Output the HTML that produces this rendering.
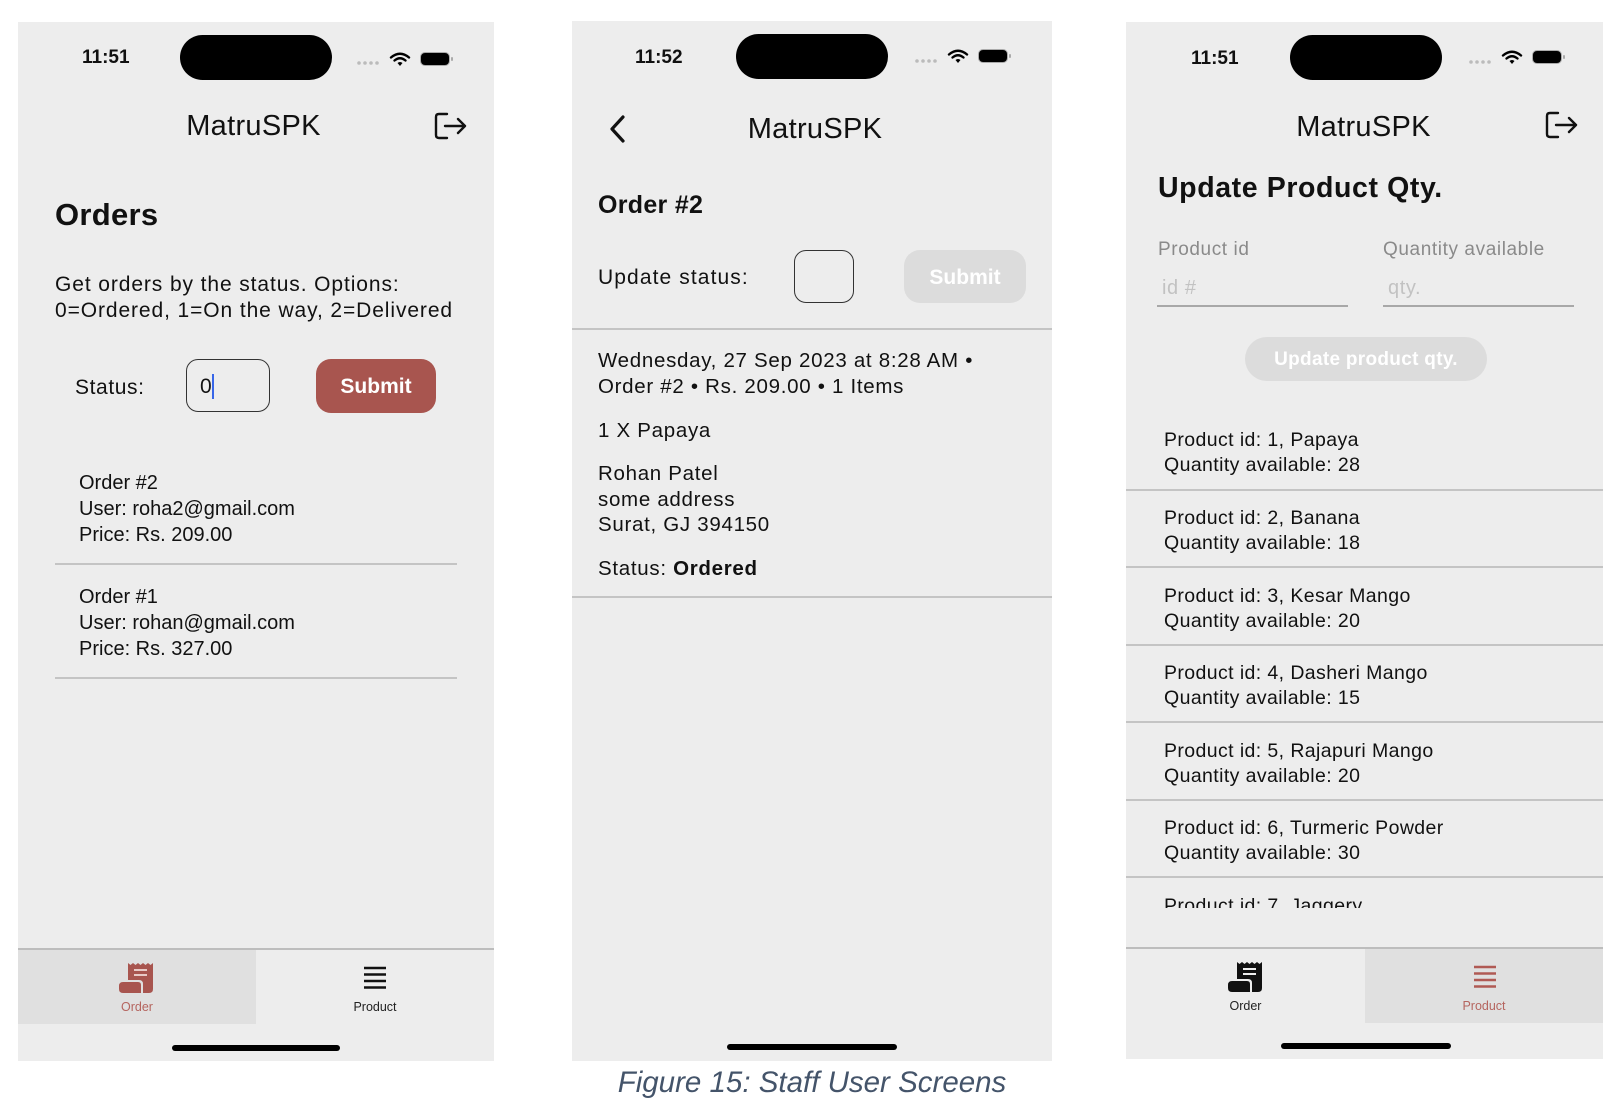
<!DOCTYPE html>
<html><head><meta charset="utf-8"><style>
*{margin:0;padding:0;box-sizing:border-box}
body{width:1624px;height:1106px;background:#fff;position:relative;overflow:hidden;font-family:"Liberation Sans",sans-serif;color:#111}
.ph{position:absolute;background:#ededed;overflow:hidden}
.a{position:absolute;white-space:nowrap}
.notch{position:absolute;background:#000;border-radius:24px;height:45px;width:152px}
.time{position:absolute;font-weight:bold;font-size:19px;line-height:20px}
.hr{position:absolute;height:2px;background:#c4c4c4}
</style></head><body>

<!-- PHONE 1 -->
<div class="ph" style="left:18px;top:22px;width:476px;height:1039px">
  <div class="time" style="left:64px;top:26px">11:51</div>
  <div class="notch" style="left:162px;top:13px"></div>
  <svg class="a" style="left:338px;top:28px" width="100" height="20" viewBox="0 0 100 20">
    <g fill="#bbb"><circle cx="3" cy="13" r="1.8"/><circle cx="9" cy="13" r="1.8"/><circle cx="15" cy="13" r="1.8"/><circle cx="21" cy="13" r="1.8"/></g>
    <g fill="none" stroke="#000" stroke-width="2.4" stroke-linecap="round"><path d="M35 7.5 Q44 0 53 7.5"/><path d="M38.5 10.5 Q44 6 49.5 10.5"/></g><path d="M41.5 13 L44 16 L46.5 13 Q44 11 41.5 13Z" fill="#000"/>
    <rect x="64.5" y="2.5" width="29" height="13" rx="4.5" fill="#000" stroke="#aaa" stroke-width="1"/><rect x="95" y="7" width="2" height="4" rx="1" fill="#aaa"/>
  </svg>
  <div class="a" style="left:0;width:476px;text-align:center;top:86px;font-size:29px;line-height:36px;padding-right:5px;letter-spacing:0.3px">MatruSPK</div>
  <svg class="a" style="left:416px;top:90px" width="34" height="28" viewBox="0 0 34 28" fill="none" stroke="#111" stroke-width="2.4" stroke-linecap="round" stroke-linejoin="round"><path d="M13 2H5Q2 2 2 5V23Q2 26 5 26H13"/><path d="M11 14H31M24 7L31 14L24 21"/></svg>
  <div class="a" style="left:37px;top:174px;font-size:31px;font-weight:bold;line-height:38px;letter-spacing:0.3px">Orders</div>
  <div class="a" style="left:37px;top:250px;font-size:21px;line-height:26px;letter-spacing:0.9px">Get orders by the status. Options:<br>0=Ordered, 1=On the way, 2=Delivered</div>
  <div class="a" style="left:57px;top:353px;font-size:21px;line-height:26px;letter-spacing:0.6px">Status:</div>
  <div class="a" style="left:168px;top:337px;width:84px;height:53px;border:1.5px solid #333;border-radius:12px"></div>
  <div class="a" style="left:182px;top:352px;font-size:21px;line-height:26px">0</div>
  <div class="a" style="left:194px;top:352px;width:2px;height:25px;background:#3866e8"></div>
  <div class="a" style="left:298px;top:337px;width:120px;height:54px;background:#a8554f;border-radius:15px;color:#fff;font-weight:bold;font-size:21px;line-height:56px;text-align:center">Submit</div>
  <div class="a" style="left:61px;top:448px;font-size:20px;line-height:26px">Order #2<br>User: roha2@gmail.com<br>Price: Rs. 209.00</div>
  <div class="hr" style="left:37px;width:402px;top:541px"></div>
  <div class="a" style="left:61px;top:562px;font-size:20px;line-height:26px">Order #1<br>User: rohan@gmail.com<br>Price: Rs. 327.00</div>
  <div class="hr" style="left:37px;width:402px;top:655px"></div>
  <div class="a" style="left:0;top:926px;width:476px;height:2px;background:#bdbdbd"></div>
  <div class="a" style="left:0;top:928px;width:238px;height:74px;background:#e0e0e0"></div>
  <svg class="a" style="left:100px;top:940px" width="36" height="32" viewBox="0 0 36 32"><path d="M10 1L12.5 3L15 1L17.5 3L20 1L22.5 3L25 1L27.5 3L30 1L32.5 3L35 1V27Q35 31 31 31H25V22Q25 18 21 18H10Z" fill="#a8554f"/><path d="M1 24Q1 20 5 20H20Q23 20 23 23V31H5Q1 31 1 27Z" fill="#a8554f"/><path d="M16 8H29M16 13H29" stroke="#e8cac7" stroke-width="2"/></svg>
  <div class="a" style="left:0;width:238px;text-align:center;top:978px;font-size:12.5px;color:#b5655f">Order</div>
  <svg class="a" style="left:345px;top:943px" width="24" height="26" viewBox="0 0 24 26"><g stroke="#111" stroke-width="2.6"><path d="M1 3H23M1 9.5H23M1 16H23M1 22.5H23"/></g></svg>
  <div class="a" style="left:238px;width:238px;text-align:center;top:978px;font-size:12.5px;color:#222">Product</div>
  <div class="a" style="left:154px;top:1023px;width:168px;height:6px;border-radius:3px;background:#000"></div>
</div>

<!-- PHONE 2 -->
<div class="ph" style="left:572px;top:21px;width:480px;height:1040px">
  <div class="time" style="left:63px;top:27px">11:52</div>
  <div class="notch" style="left:164px;top:13px"></div>
  <svg class="a" style="left:342px;top:26px" width="100" height="20" viewBox="0 0 100 20">
    <g fill="#bbb"><circle cx="3" cy="14" r="1.8"/><circle cx="9" cy="14" r="1.8"/><circle cx="15" cy="14" r="1.8"/><circle cx="21" cy="14" r="1.8"/></g>
    <g fill="none" stroke="#000" stroke-width="2.4" stroke-linecap="round"><path d="M35 7.5 Q44 0 53 7.5"/><path d="M38.5 10.5 Q44 6 49.5 10.5"/></g><path d="M41.5 13 L44 16 L46.5 13 Q44 11 41.5 13Z" fill="#000"/>
    <rect x="64.5" y="2.5" width="29" height="13" rx="4.5" fill="#000" stroke="#aaa" stroke-width="1"/><rect x="95" y="7" width="2" height="4" rx="1" fill="#aaa"/>
  </svg>
  <svg class="a" style="left:36px;top:94px" width="20" height="28" viewBox="0 0 20 28" fill="none" stroke="#111" stroke-width="3.2" stroke-linecap="round" stroke-linejoin="round"><path d="M15 2L4 14L15 26"/></svg>
  <div class="a" style="left:0;width:480px;text-align:center;top:90px;font-size:29px;line-height:36px;padding-left:6px;letter-spacing:0.3px">MatruSPK</div>
  <div class="a" style="left:26px;top:168px;font-size:25px;font-weight:bold;line-height:32px;letter-spacing:0.3px">Order #2</div>
  <div class="a" style="left:26px;top:244px;font-size:21px;line-height:26px;letter-spacing:1.1px">Update status:</div>
  <div class="a" style="left:222px;top:229px;width:60px;height:53px;border:1.5px solid #333;border-radius:12px"></div>
  <div class="a" style="left:332px;top:229px;width:122px;height:53px;background:#dcdcdc;border-radius:16px;color:#fff;font-weight:bold;font-size:21px;line-height:55px;text-align:center">Submit</div>
  <div class="hr" style="left:0;width:480px;top:307px"></div>
  <div class="a" style="left:26px;top:327px;font-size:20.5px;line-height:26px;letter-spacing:0.7px">Wednesday, 27 Sep 2023 at 8:28 AM •<br>Order #2 • Rs. 209.00 • 1 Items</div>
  <div class="a" style="left:26px;top:397px;font-size:20.5px;line-height:26px;letter-spacing:0.7px">1 X Papaya</div>
  <div class="a" style="left:26px;top:440px;font-size:20.5px;line-height:25.5px;letter-spacing:0.7px">Rohan Patel<br>some address<br>Surat, GJ 394150</div>
  <div class="a" style="left:26px;top:535px;font-size:20.5px;line-height:26px;letter-spacing:0.7px">Status: <b>Ordered</b></div>
  <div class="hr" style="left:0;width:480px;top:575px"></div>
  <div class="a" style="left:155px;top:1023px;width:170px;height:6px;border-radius:3px;background:#000"></div>
</div>

<!-- PHONE 3 -->
<div class="ph" style="left:1126px;top:22px;width:477px;height:1037px">
  <div class="time" style="left:65px;top:27px">11:51</div>
  <div class="notch" style="left:164px;top:13px"></div>
  <svg class="a" style="left:342px;top:26px" width="100" height="20" viewBox="0 0 100 20">
    <g fill="#bbb"><circle cx="3" cy="14" r="1.8"/><circle cx="9" cy="14" r="1.8"/><circle cx="15" cy="14" r="1.8"/><circle cx="21" cy="14" r="1.8"/></g>
    <g fill="none" stroke="#000" stroke-width="2.4" stroke-linecap="round"><path d="M35 7.5 Q44 0 53 7.5"/><path d="M38.5 10.5 Q44 6 49.5 10.5"/></g><path d="M41.5 13 L44 16 L46.5 13 Q44 11 41.5 13Z" fill="#000"/>
    <rect x="64.5" y="2.5" width="29" height="13" rx="4.5" fill="#000" stroke="#aaa" stroke-width="1"/><rect x="95" y="7" width="2" height="4" rx="1" fill="#aaa"/>
  </svg>
  <div class="a" style="left:0;width:477px;text-align:center;top:87px;font-size:29px;line-height:36px;padding-right:2px;letter-spacing:0.3px">MatruSPK</div>
  <svg class="a" style="left:419px;top:89px" width="34" height="28" viewBox="0 0 34 28" fill="none" stroke="#111" stroke-width="2.4" stroke-linecap="round" stroke-linejoin="round"><path d="M13 2H5Q2 2 2 5V23Q2 26 5 26H13"/><path d="M11 14H31M24 7L31 14L24 21"/></svg>
  <div class="a" style="left:32px;top:148px;font-size:28.5px;font-weight:bold;line-height:36px;letter-spacing:0.6px">Update Product Qty.</div>
  <div class="a" style="left:32px;top:216px;font-size:19px;line-height:24px;color:#8a8a8a;letter-spacing:0.6px">Product id</div>
  <div class="a" style="left:257px;top:216px;font-size:19px;line-height:24px;color:#8a8a8a;letter-spacing:0.6px">Quantity available</div>
  <div class="a" style="left:36px;top:254px;font-size:20px;line-height:24px;color:#c2c2c2;letter-spacing:0.6px">id #</div>
  <div class="a" style="left:262px;top:254px;font-size:20px;line-height:24px;color:#c2c2c2;letter-spacing:0.6px">qty.</div>
  <div class="a" style="left:31px;top:283px;width:191px;height:2px;background:#a8a8a8"></div>
  <div class="a" style="left:257px;top:283px;width:191px;height:2px;background:#a8a8a8"></div>
  <div class="a" style="left:119px;top:315px;width:242px;height:44px;background:#dcdcdc;border-radius:22px;color:#fff;font-weight:bold;font-size:19px;line-height:46px;text-align:center;letter-spacing:0.3px">Update product qty.</div>
  <div class="a" style="left:38px;top:406px;font-size:19.5px;line-height:24.5px;letter-spacing:0.4px">Product id: 1, Papaya<br>Quantity available: 28</div>
  <div class="hr" style="left:0;width:477px;top:467px"></div>
  <div class="a" style="left:38px;top:484px;font-size:19.5px;line-height:24.5px;letter-spacing:0.4px">Product id: 2, Banana<br>Quantity available: 18</div>
  <div class="hr" style="left:0;width:477px;top:544px"></div>
  <div class="a" style="left:38px;top:562px;font-size:19.5px;line-height:24.5px;letter-spacing:0.4px">Product id: 3, Kesar Mango<br>Quantity available: 20</div>
  <div class="hr" style="left:0;width:477px;top:622px"></div>
  <div class="a" style="left:38px;top:639px;font-size:19.5px;line-height:24.5px;letter-spacing:0.4px">Product id: 4, Dasheri Mango<br>Quantity available: 15</div>
  <div class="hr" style="left:0;width:477px;top:699px"></div>
  <div class="a" style="left:38px;top:717px;font-size:19.5px;line-height:24.5px;letter-spacing:0.4px">Product id: 5, Rajapuri Mango<br>Quantity available: 20</div>
  <div class="hr" style="left:0;width:477px;top:777px"></div>
  <div class="a" style="left:38px;top:794px;font-size:19.5px;line-height:24.5px;letter-spacing:0.4px">Product id: 6, Turmeric Powder<br>Quantity available: 30</div>
  <div class="hr" style="left:0;width:477px;top:854px"></div>
  <div class="a" style="left:38px;top:872px;height:14px;overflow:hidden;font-size:19.5px;line-height:24.5px;letter-spacing:0.4px">Product id: 7, Jaggery</div>
  <div class="a" style="left:0;top:925px;width:477px;height:2px;background:#bdbdbd"></div>
  <div class="a" style="left:239px;top:927px;width:238px;height:74px;background:#e0e0e0"></div>
  <svg class="a" style="left:101px;top:939px" width="36" height="32" viewBox="0 0 36 32"><path d="M10 1L12.5 3L15 1L17.5 3L20 1L22.5 3L25 1L27.5 3L30 1L32.5 3L35 1V27Q35 31 31 31H25V22Q25 18 21 18H10Z" fill="#111"/><path d="M1 24Q1 20 5 20H20Q23 20 23 23V31H5Q1 31 1 27Z" fill="#111"/><path d="M16 8H29M16 13H29" stroke="#eee" stroke-width="2"/></svg>
  <div class="a" style="left:0;width:239px;text-align:center;top:977px;font-size:12.5px;color:#222">Order</div>
  <svg class="a" style="left:347px;top:942px" width="24" height="26" viewBox="0 0 24 26"><g stroke="#b05a54" stroke-width="2.6"><path d="M1 3H23M1 9.5H23M1 16H23M1 22.5H23"/></g></svg>
  <div class="a" style="left:239px;width:238px;text-align:center;top:977px;font-size:12.5px;color:#b5655f">Product</div>
  <div class="a" style="left:155px;top:1021px;width:170px;height:6px;border-radius:3px;background:#000"></div>
</div>

<div class="a" style="left:0;width:1624px;text-align:center;top:1065px;font-size:29.5px;line-height:36px;font-style:italic;color:#44546a">Figure 15: Staff User Screens</div>
</body></html>
